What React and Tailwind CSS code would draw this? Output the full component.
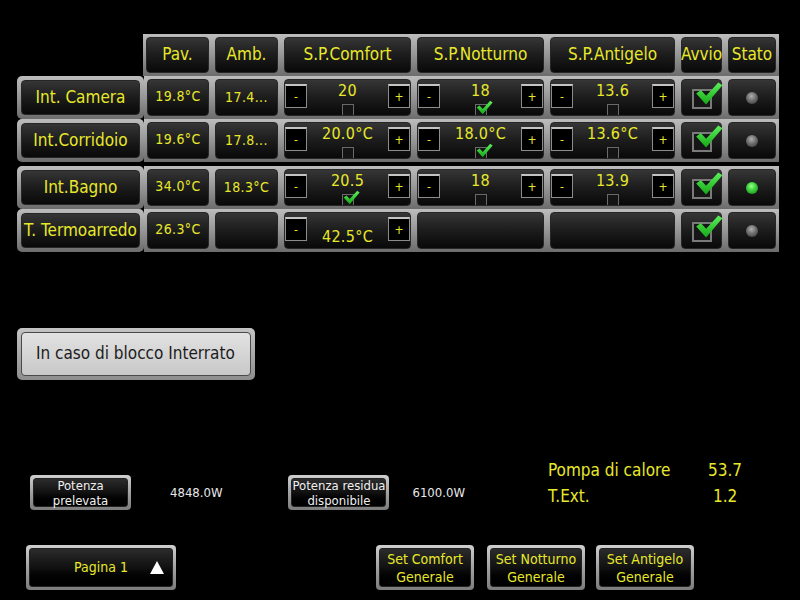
import React from "react";

const YEL = "text-[#e8e82a]";

const rows = [
  { label: "Int. Camera", pav: "19.8°C", amb: "17.4...", sp: [{ v: "20" }, { v: "18", chk: true }, { v: "13.6" }], led: "gray" },
  { label: "Int.Corridoio", pav: "19.6°C", amb: "17.8...", sp: [{ v: "20.0°C" }, { v: "18.0°C", chk: true }, { v: "13.6°C" }], led: "gray" },
];
const rows2 = [
  { label: "Int.Bagno", pav: "34.0°C", amb: "18.3°C", sp: [{ v: "20.5", chk: true }, { v: "18" }, { v: "13.9" }], led: "green" },
  { label: "T. Termoarredo", pav: "26.3°C", amb: "", sp: [{ v: "42.5°C", low: true }, null, null], led: "gray" },
];
const spWidths = ["w-[133px]", "w-[133px]", "w-[131px]"];

function Cell({ className = "", inner = "", children }) {
  return (
    <div className={`h-full shrink-0 p-[3px] bg-linear-to-b from-[#bdbdbd] via-[#969696] to-[#6c6c6c] ${className}`}>
      <div className={`h-full rounded-[4px] border border-[#262626] bg-linear-to-b from-[#363636] via-[#1c1c1c] to-[#090909] ${inner}`}>
        {children}
      </div>
    </div>
  );
}

function Tick({ className }) {
  return (
    <svg viewBox="0 0 24 20" className={className}>
      <defs>
        <linearGradient id="tg" x1="0" y1="0" x2="0" y2="1">
          <stop offset="0" stopColor="#5cf05c" />
          <stop offset="1" stopColor="#14a814" />
        </linearGradient>
      </defs>
      <path d="M1 10 L5 7 L9.5 12 L20 0.5 L23.5 3 L9.5 19.5 Z" fill="url(#tg)" />
    </svg>
  );
}

function SmallBox({ checked }) {
  return (
    <div className="relative w-[12px] h-[12px] border border-[#6a6a6a] bg-[#141414]">
      {checked && <Tick className="absolute left-[0px] -top-[5px] w-[17px] h-[15px]" />}
    </div>
  );
}

function PM({ label }) {
  return (
    <div className={`mt-[4px] w-[22px] h-[24px] shrink-0 bg-black border border-[#8c8c8c] border-t-2 border-t-[#c4c4c4] flex items-center justify-center text-[12px] ${YEL}`}>
      {label}
    </div>
  );
}

function SetPoint({ sp, w }) {
  if (!sp) return <Cell className={w} />;
  return (
    <Cell className={w} inner="flex overflow-hidden">
      <PM label="-" />
      <div className="flex-1 flex flex-col items-center h-full">
        {sp.low ? (
          <span className={`mt-auto mb-[3px] text-[16px] leading-[17px] tracking-[0.3px] ${YEL}`}>{sp.v}</span>
        ) : (
          <>
            <span className={`mt-[2px] text-[16px] leading-[17px] tracking-[0.3px] ${YEL}`}>{sp.v}</span>
            <div className="mt-auto -mb-[1px]">
              <SmallBox checked={sp.chk} />
            </div>
          </>
        )}
      </div>
      <PM label="+" />
    </Cell>
  );
}

function Led({ color }) {
  const c =
    color === "green"
      ? "bg-[radial-gradient(circle_at_45%_35%,#9cff8c_0%,#3fd43f_40%,#127a12_100%)]"
      : "bg-[radial-gradient(circle_at_45%_35%,#b0b0b0_0%,#6e6e6e_45%,#2e2e2e_100%)]";
  return <div className={`w-[12px] h-[12px] rounded-full ${c}`} />;
}

function Row({ r }) {
  return (
    <div className="flex h-[43px] ml-[17px]">
      <Cell className="w-[127px] rounded-[5px] p-[4px]" inner="flex items-center justify-center">
        <span className={`whitespace-nowrap text-[17px] ${YEL}`}>{r.label}</span>
      </Cell>
      <Cell className="w-[68px]" inner="flex items-center justify-center">
        <span className={`text-[14px] tracking-[0.4px] -mt-[3px] ${YEL}`}>{r.pav}</span>
      </Cell>
      <Cell className="w-[69px]" inner="flex items-center justify-center">
        <span className={`text-[14px] tracking-[0.4px] ${YEL}`}>{r.amb}</span>
      </Cell>
      {r.sp.map((s, i) => (
        <SetPoint key={i} sp={s} w={spWidths[i]} />
      ))}
      <Cell className="w-[47px]" inner="flex items-center justify-center">
        <div className="relative w-[20px] h-[20px] border-2 border-[#7a7a7a] bg-[#161616] mt-[2px]">
          <Tick className="absolute left-[1px] -top-[10px] w-[28px] h-[25px]" />
        </div>
      </Cell>
      <Cell className="w-[54px]" inner="flex items-center justify-center">
        <Led color={r.led} />
      </Cell>
    </div>
  );
}

function DarkBtn({ className = "", inner = "", children }) {
  return (
    <div className={`shrink-0 rounded-[4px] p-[3px] bg-linear-to-b from-[#cfcfcf] via-[#a2a2a2] to-[#7c7c7c] ${className}`}>
      <div className={`h-full rounded-[3px] border border-[#222] bg-linear-to-b from-[#2c2c2c] via-[#111] to-black ${inner}`}>
        {children}
      </div>
    </div>
  );
}

export default function App() {
  return (
    <div className="w-[800px] h-[600px] bg-black overflow-hidden font-['DejaVu_Sans_Condensed','DejaVu_Sans',sans-serif] font-stretch-condensed">
      <div className="pt-[34px]">
        <div className="flex h-[42px] ml-[143px]">
          {[
            ["Pav.", "w-[69px]"],
            ["Amb.", "w-[69px]"],
            ["S.P.Comfort", "w-[133px]"],
            ["S.P.Notturno", "w-[133px]"],
            ["S.P.Antigelo", "w-[131px]"],
            ["Avvio", "w-[47px]"],
            ["Stato", "w-[54px]"],
          ].map(([t, w]) => (
            <Cell key={t} className={w} inner="flex items-center justify-center">
              <span className={`text-[17px] whitespace-nowrap ${YEL}`}>{t}</span>
            </Cell>
          ))}
        </div>
        {rows.map((r) => (
          <Row key={r.label} r={r} />
        ))}
        <div className="h-[4px]" />
        {rows2.map((r) => (
          <Row key={r.label} r={r} />
        ))}
      </div>

      <div className="mt-[76px] ml-[17px] w-[238px] h-[52px] rounded-[5px] p-[4px] bg-linear-to-b from-[#c4c4c4] to-[#8e8e8e]">
        <div className="h-full rounded-[4px] border border-[#4a4a4a] bg-linear-to-b from-[#e2e2e2] to-[#c8c8c8] flex items-center pl-[14px]">
          <span className="text-[17px] text-[#1c1c1c] whitespace-nowrap">In caso di blocco Interrato</span>
        </div>
      </div>

      <div className="mt-[80px] flex h-[50px]">
        <div className="flex items-center pt-[15px] h-full">
          <DarkBtn className="ml-[30px] w-[101px] h-[35px]" inner="flex flex-col items-center justify-center leading-[15px] text-[13px] text-[#f0f0f0]">
            <span>Potenza</span>
            <span>prelevata</span>
          </DarkBtn>
          <span className="ml-[39px] text-[13px] text-[#e8e8e8]">4848.0W</span>
          <DarkBtn className="ml-[66px] w-[101px] h-[35px]" inner="flex flex-col items-center justify-center leading-[15px] text-[13px] text-[#f0f0f0]">
            <span className="whitespace-nowrap">Potenza residua</span>
            <span>disponibile</span>
          </DarkBtn>
          <span className="ml-[23px] text-[13px] text-[#e8e8e8]">6100.0W</span>
        </div>
        <div className={`ml-[83px] -mt-[1px] grid grid-cols-[160px_auto] leading-[23px] text-[17px] ${YEL}`}>
          <span>Pompa di calore</span>
          <span>53.7</span>
          <span>T.Ext.</span>
          <span className="pl-[5px]">1.2</span>
        </div>
      </div>

      <div className="mt-[35px] flex">
        <DarkBtn className="ml-[26px] w-[150px] h-[45px]" inner="flex items-center">
          <span className={`ml-[44px] text-[14px] ${YEL}`}>Pagina 1</span>
          <span className="ml-[22px] w-0 h-0 border-l-[7px] border-r-[7px] border-b-[13px] border-l-transparent border-r-transparent border-b-white" />
        </DarkBtn>
        {[
          ["Set Comfort", "ml-[200px]"],
          ["Set Notturno", "ml-[13px]"],
          ["Set Antigelo", "ml-[11px]"],
        ].map(([t, m]) => (
          <DarkBtn key={t} className={`${m} w-[98px] h-[45px]`} inner={`flex flex-col items-center justify-center leading-[18px] text-[14px] ${YEL}`}>
            <span className="whitespace-nowrap">{t}</span>
            <span>Generale</span>
          </DarkBtn>
        ))}
      </div>
    </div>
  );
}
